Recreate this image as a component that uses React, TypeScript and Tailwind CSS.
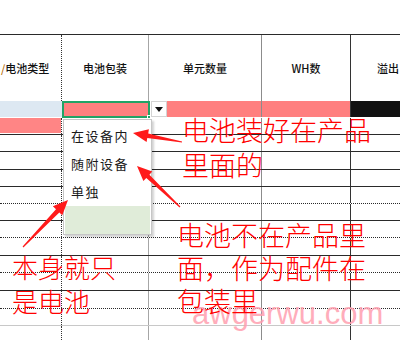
import React from 'react';

type Pt = [number, number];

// tapered red arrow, computed from tail and head points
function arrowPoints(tail: Pt, head: Pt, headLen = 15, headHalf = 6.5, shaft = 4.5): string {
  const dx = head[0] - tail[0];
  const dy = head[1] - tail[1];
  const len = Math.hypot(dx, dy);
  const ux = dx / len;
  const uy = dy / len;
  const nx = -uy;
  const ny = ux;
  const bx = head[0] - ux * headLen;
  const by = head[1] - uy * headLen;
  const pts: Pt[] = [
    [tail[0] + nx * 0.6, tail[1] + ny * 0.6],
    [bx + (nx * shaft) / 2, by + (ny * shaft) / 2],
    [bx + nx * headHalf, by + ny * headHalf],
    head,
    [bx - nx * headHalf, by - ny * headHalf],
    [bx - (nx * shaft) / 2, by - (ny * shaft) / 2],
    [tail[0] - nx * 0.6, tail[1] - ny * 0.6],
  ];
  return pts.map(p => p.map(v => v.toFixed(1)).join(',')).join(' ');
}

const bodyRows = [
  { h: 'h-[17px]', line: 'border-b border-[#2a2a2a]', pinkA: true },
  { h: 'h-[17px]', line: 'border-b border-[#2a2a2a]' },
  { h: 'h-[18px]', line: 'border-b border-[#2a2a2a]' },
  { h: 'h-[17px]', line: 'border-b border-[#2a2a2a]' },
  { h: 'h-[17px]', line: 'border-b border-dotted border-[#2a2a2a]' },
  { h: 'h-[17px]', line: 'border-b border-[#2a2a2a]' },
  { h: 'h-[17px]', line: 'border-b border-dotted border-[#2a2a2a]' },
  { h: 'h-[18px]', line: 'border-b border-[#2a2a2a]' },
  { h: 'h-[17px]', line: 'border-b border-dotted border-[#2a2a2a]' },
  { h: 'h-[18px]', line: 'border-b border-[#2a2a2a]' },
  { h: 'h-[18px]', line: 'border-b border-dotted border-[#2a2a2a]' },
  { h: 'h-[17px]', line: 'border-b border-[#c8c8c8]' },
  { h: 'h-[14px]', line: '' },
];

const cjk = { fontFamily: '"Noto Sans CJK SC", "Noto Sans", sans-serif' };

const App: React.FC = () => {
  return (
    <div className="relative w-[400px] h-[340px] overflow-hidden bg-white" style={cjk}>
      {/* blank area above the sheet */}
      <div className="h-[34px]" />

      {/* header row */}
      <div className="flex h-[67px] border-t border-[#2a2a2a] text-[11px] font-medium text-[#111]">
        <div className="w-[62px] shrink-0 flex items-center pl-[1px] border-r border-dotted border-[#333] whitespace-nowrap">
          <span className="text-[#b86a00]">/</span>电池类型
        </div>
        <div className="w-[87px] shrink-0 flex items-center justify-center border-r border-[#a6a6a6]">电池包装</div>
        <div className="w-[113px] shrink-0 flex items-center justify-center border-r border-[#8c8c8c]">单元数量</div>
        <div className="w-[89px] shrink-0 flex items-center justify-center border-r border-[#333]">WH数</div>
        <div className="w-[49px] shrink-0 flex items-center pl-[26px] whitespace-nowrap">溢出</div>
      </div>

      {/* first data row (selected) */}
      <div className="flex h-[17px]">
        <div className="w-[62px] shrink-0 h-[16px] bg-[#dde8f2]" />
        <div className="relative w-[88px] shrink-0 h-[17px] bg-[#ff7f7f] border-2 border-[#21a366]">
          <div className="absolute -right-[3px] -bottom-[3px] w-[4px] h-[4px] bg-[#21a366] border border-white" />
        </div>
        <div className="w-[112px] shrink-0 h-[16px] flex border-r border-[#8c8c8c]">
          <div className="w-[16px] ml-[1px] h-[16px] bg-white border border-[#d4d4d4] flex items-center justify-center">
            <svg width="8" height="5" viewBox="0 0 8 5">
              <polygon points="0,0 8,0 4,5" fill="#111" />
            </svg>
          </div>
          <div className="flex-1 bg-[#ff7f7f]" />
        </div>
        <div className="w-[89px] shrink-0 h-[16px] bg-[#ff7f7f] border-r border-[#333]" />
        <div className="w-[80px] shrink-0 h-[16px] bg-[#111]" />
      </div>

      {/* body rows */}
      {bodyRows.map((r, i) => (
        <div key={i} className={`flex ${r.h} ${r.line}`}>
          <div className="w-[62px] shrink-0 h-full border-r border-dotted border-[#333] pb-[1px]">
            {r.pinkA && <div className="h-full bg-[#ff8585]" />}
          </div>
          <div className="w-[87px] shrink-0 border-r border-[#a6a6a6]" />
          <div className="w-[113px] shrink-0 border-r border-[#8c8c8c]" />
          <div className="w-[89px] shrink-0 border-r border-[#333]" />
          <div className="w-[80px] shrink-0" />
        </div>
      ))}

      {/* validation dropdown list */}
      <div className="absolute left-[63px] top-[119px] w-[89px] h-[116px] bg-white border border-[#c6c6c6] shadow-[2px_2px_2px_rgba(0,0,0,0.18)] pt-[2px] px-[1px] text-[13px] tracking-[1.5px] text-[#1a1a1a]">
        <div className="h-[28px] flex items-center pl-[6px]">在设备内</div>
        <div className="h-[28px] flex items-center pl-[6px]">随附设备</div>
        <div className="h-[28px] flex items-center pl-[6px]">单独</div>
        <div className="h-[28px] bg-[#e0ecd9]" />
      </div>

      {/* watermark */}
      <div
        className="absolute left-[192px] top-[298px] text-[31px] leading-none text-[#ff9fb0] opacity-85 whitespace-nowrap"
        style={{ fontFamily: '"Liberation Sans", Arial, sans-serif' }}
      >
        awgerwu.com
      </div>

      {/* red annotations */}
      <div className="absolute left-[182px] top-[112px] text-[27px] leading-[35px] text-[#ff0000] font-light whitespace-nowrap">
        电池装好在产品
        <br />
        里面的
      </div>
      <div className="absolute left-[177px] top-[218px] text-[27px] leading-[33px] text-[#ff0000] font-light whitespace-nowrap">
        电池不在产品里
        <br />
        面，作为配件在
        <br />
        包装里
      </div>
      <div className="absolute left-[12px] top-[250px] text-[26px] leading-[34px] text-[#ff0000] font-light whitespace-nowrap">
        本身就只
        <br />
        是电池
      </div>

      {/* arrows */}
      <svg className="absolute inset-0 pointer-events-none" width="400" height="340" viewBox="0 0 400 340">
        <polygon points={arrowPoints([182, 142], [133, 133])} fill="#ff1a1a" />
        <polygon points={arrowPoints([180, 207], [137, 166])} fill="#ff1a1a" />
        <polygon points={arrowPoints([23, 247], [68, 200])} fill="#ff1a1a" />
      </svg>
    </div>
  );
};

export default App;
